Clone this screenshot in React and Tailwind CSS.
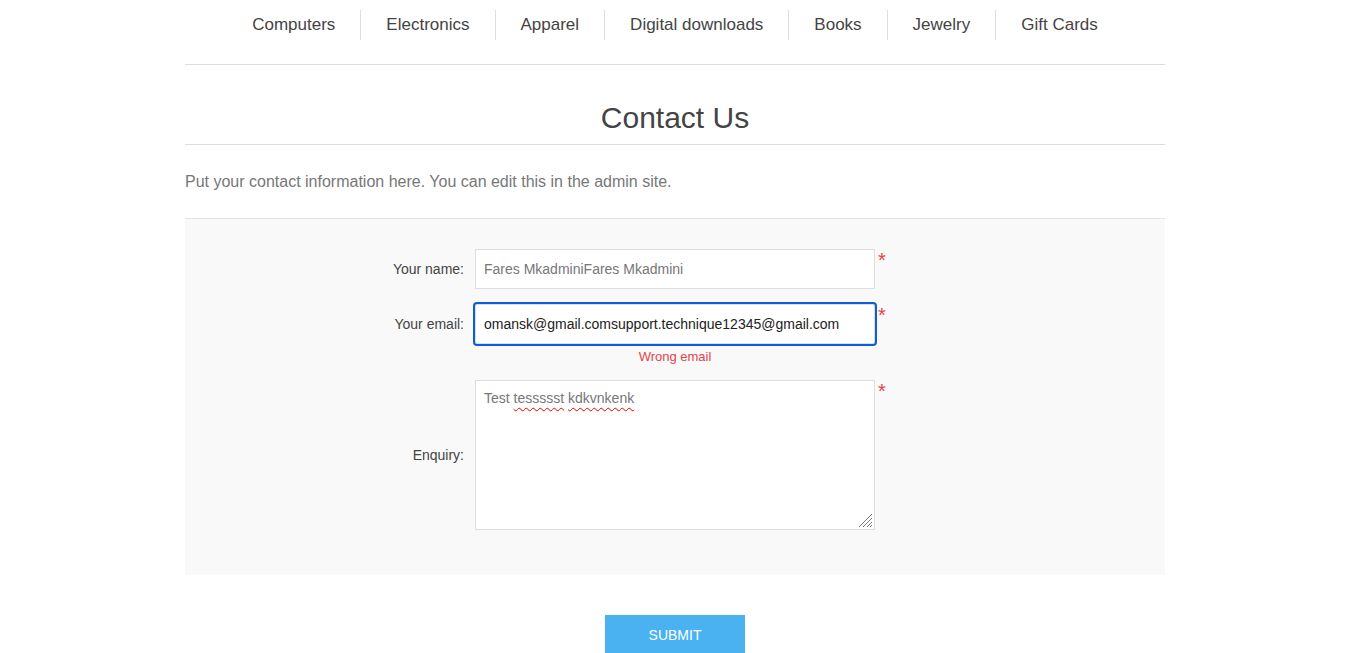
const categories = ['Computers', 'Electronics', 'Apparel', 'Digital downloads', 'Books', 'Jewelry', 'Gift Cards']

function Required() {
  return <span className="self-start ml-[3px] -mr-[8px] text-[20px] leading-[23px] text-[#e4434b]">*</span>
}

function Row({ label, children, className = '' }) {
  return (
    <div className={`flex items-center ${className}`}>
      <label className="w-[279px] mr-[11px] text-right text-[14px] text-[#444]">{label}</label>
      {children}
      <Required />
    </div>
  )
}

function ResizeGrip() {
  return (
    <svg className="absolute right-[1px] bottom-[1px]" width="15" height="15" viewBox="0 0 15 15">
      <path d="M14 1 L1 14 M14 5 L5 14 M14 9 L9 14 M14 12 L12 14" stroke="#777" strokeWidth="1" fill="none" />
    </svg>
  )
}

export default function App() {
  return (
    <div className="min-h-screen bg-white font-['Liberation_Sans',Arial,sans-serif]">
      {/* page laid out as if a scrollbar took 16px on the right */}
      <div className="w-[1350px]">
        <div className="w-[980px] mx-auto">
          <nav className="pt-[10px] pb-[24px] border-b border-[#ddd]">
            <ul className="flex justify-center">
              {categories.map((c, i) => (
                <li
                  key={c}
                  className={`px-[25px] py-[5px] text-[17px] leading-[20px] text-[#444] ${i > 0 ? 'border-l border-[#ddd]' : ''}`}
                >
                  {c}
                </li>
              ))}
            </ul>
          </nav>

          <h1 className="mt-[35px] pb-[8px] border-b border-[#ddd] text-center text-[30px] leading-[36px] font-normal text-[#444]">
            Contact Us
          </h1>

          <p className="mt-[26px] text-[16px] leading-[22px] text-[#777]">
            Put your contact information here. You can edit this in the admin site.
          </p>

          <form className="mt-[25px] border-t border-[#e5e5e5] bg-[#f9f9f9] pt-[30px] pb-[45px]">
            <Row label="Your name:">
              <div className="w-[400px] h-[40px] border border-[#ddd] bg-white px-[8px] flex items-center text-[14px] text-[#777]">
                Fares MkadminiFares Mkadmini
              </div>
            </Row>

            <Row label="Your email:" className="mt-[15px]">
              <div className="w-[400px] h-[40px] border border-[#ddd] bg-white px-[8px] pt-[1px] flex items-center text-[14px] text-[#222] outline-2 outline-[#0b5ed7] rounded-[2px]">
                omansk@gmail.comsupport.technique12345@gmail.com
              </div>
            </Row>
            <div className="mt-[4px] text-center text-[13px] leading-[18px] text-[#e4434b]">Wrong email</div>

            <Row label="Enquiry:" className="mt-[14px]">
              <div className="relative w-[400px] h-[150px] border border-[#ddd] bg-white px-[8px] pt-[7px] pb-[8px] text-[14px] leading-[20px] text-[#777]">
                Test{' '}
                <span className="underline decoration-wavy decoration-[#e00] decoration-1 underline-offset-[4px]">tessssst</span>{' '}
                <span className="underline decoration-wavy decoration-[#e00] decoration-1 underline-offset-[4px]">kdkvnkenk</span>
                <ResizeGrip />
              </div>
            </Row>
          </form>

          <div className="mt-[40px] flex justify-center">
            <button className="w-[140px] h-[40px] bg-[#4ab2f1] text-white text-[14px] uppercase">Submit</button>
          </div>
        </div>
      </div>
    </div>
  )
}
